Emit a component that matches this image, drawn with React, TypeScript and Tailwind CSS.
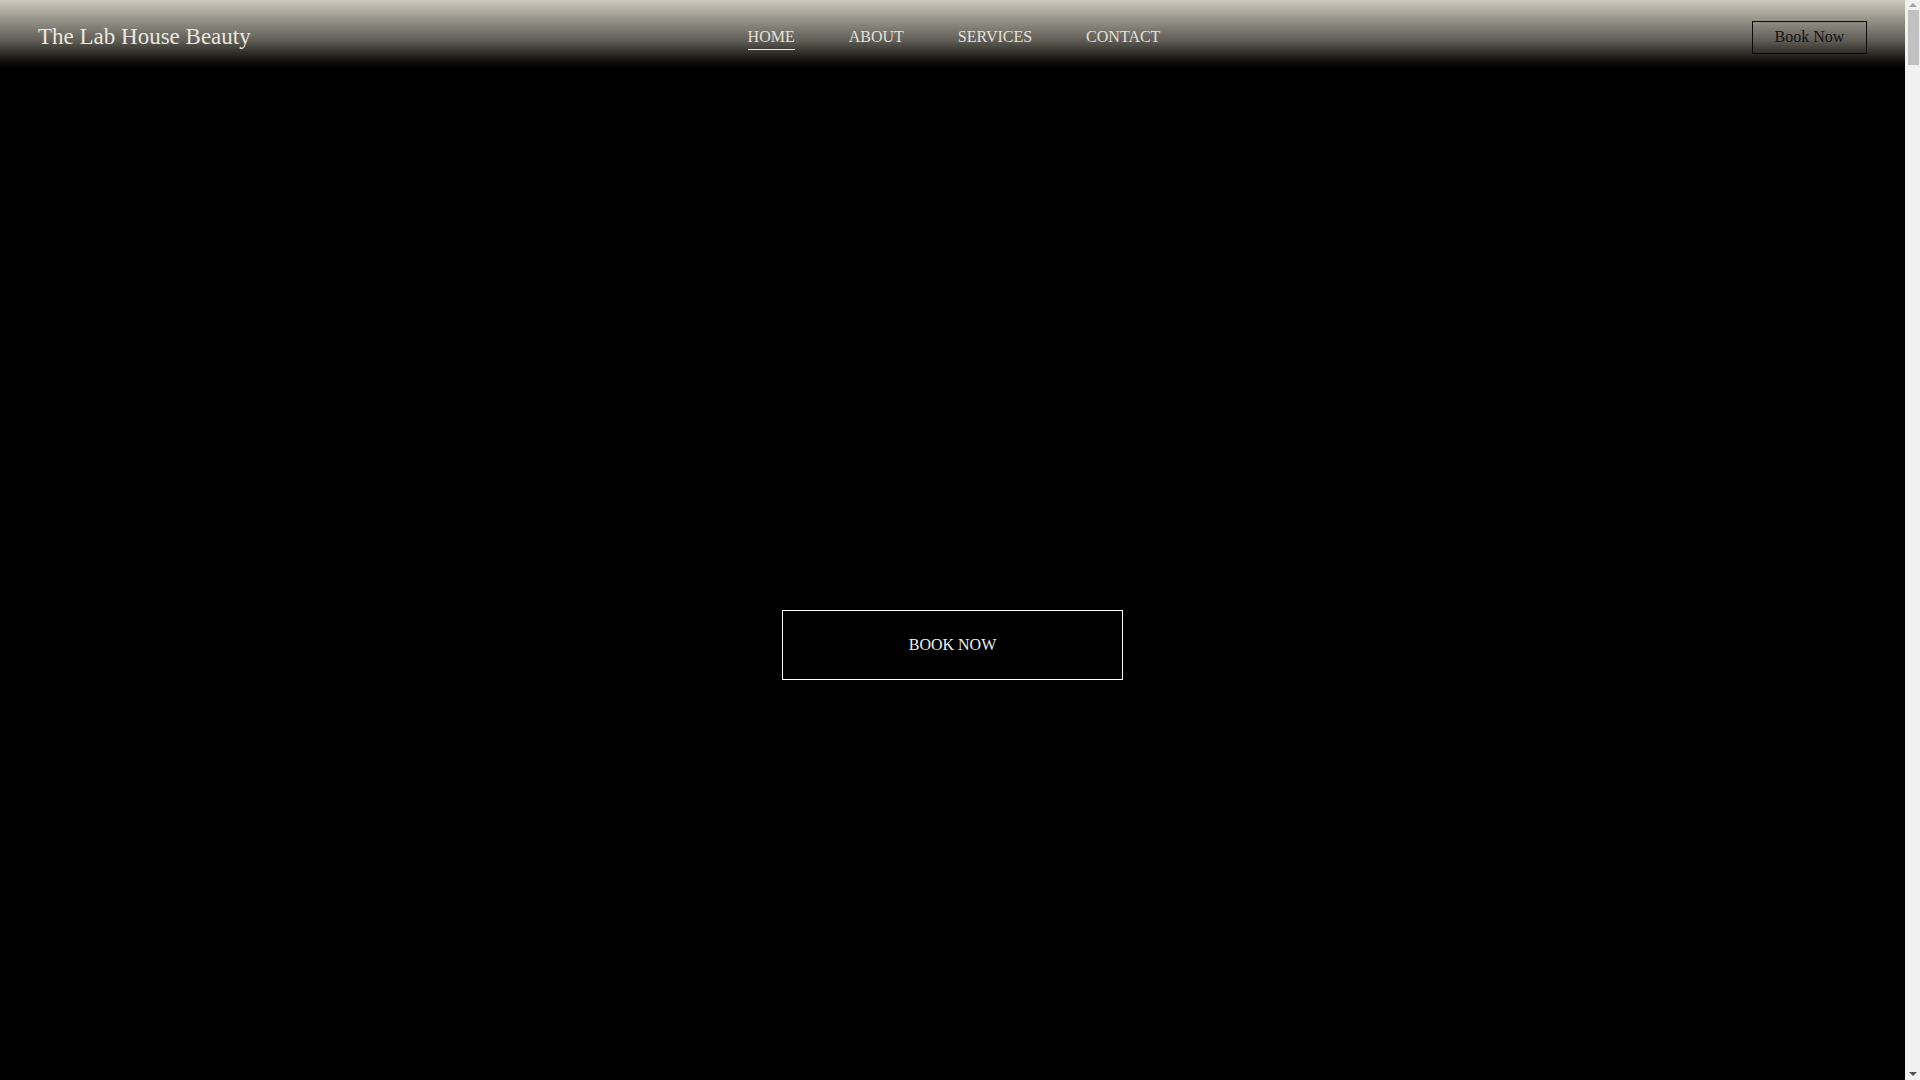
import React from 'react'

const navLinks = ['Home', 'About', 'Services', 'Contact']

function Header() {
  return (
    <header className="grid h-[74px] grid-cols-[1fr_auto_1fr] items-center bg-gradient-to-b from-[#cdc9bd] via-[#5f5d56] via-55% to-black px-[38px]">
      <div className="text-[23px] leading-[28px] text-[#ebe7df]">The Lab House Beauty</div>
      <nav className="ml-[3px] flex items-center gap-[54px]">
        {navLinks.map((link, i) => (
          <a
            key={link}
            href="#"
            className={`pt-[3px] pb-[2px] text-[16px] uppercase leading-[20px] text-[#e4e1d9] ${
              i === 0 ? 'border-b border-[#ebe7df]' : 'border-b border-transparent'
            }`}
          >
            {link}
          </a>
        ))}
      </nav>
      <div className="flex justify-end">
        <button className="h-[33px] w-[115px] border border-[#0a0a0a] text-[16px] leading-[20px] text-[#141412]">
          Book Now
        </button>
      </div>
    </header>
  )
}

// stand-in for the browser's scrollbar seen in the picture
function Scrollbar() {
  return (
    <div className="flex h-full w-[15px] shrink-0 flex-col items-center bg-[#f1f1f1]">
      <div className="mt-[3px] h-0 w-0 border-x-[4px] border-b-[4px] border-x-transparent border-b-[#a3a3a3]" />
      <div className="mt-[3px] ml-[1px] h-[55px] w-[11px] bg-[#c1c1c1]" />
      <div className="flex-1" />
      <div className="mb-[4px] h-0 w-0 border-x-[4px] border-t-[4px] border-x-transparent border-t-[#505050]" />
    </div>
  )
}

export default function App() {
  return (
    <div className="flex h-screen overflow-hidden bg-black font-['Liberation_Serif',_'Times_New_Roman',_serif]">
      <main className="min-w-0 flex-1">
        <Header />
        <section className="flex justify-center pt-[536px]">
          <button className="h-[70px] w-[341px] border border-white text-[16px] uppercase text-[#f0f0f0]">
            Book Now
          </button>
        </section>
      </main>
      <Scrollbar />
    </div>
  )
}
